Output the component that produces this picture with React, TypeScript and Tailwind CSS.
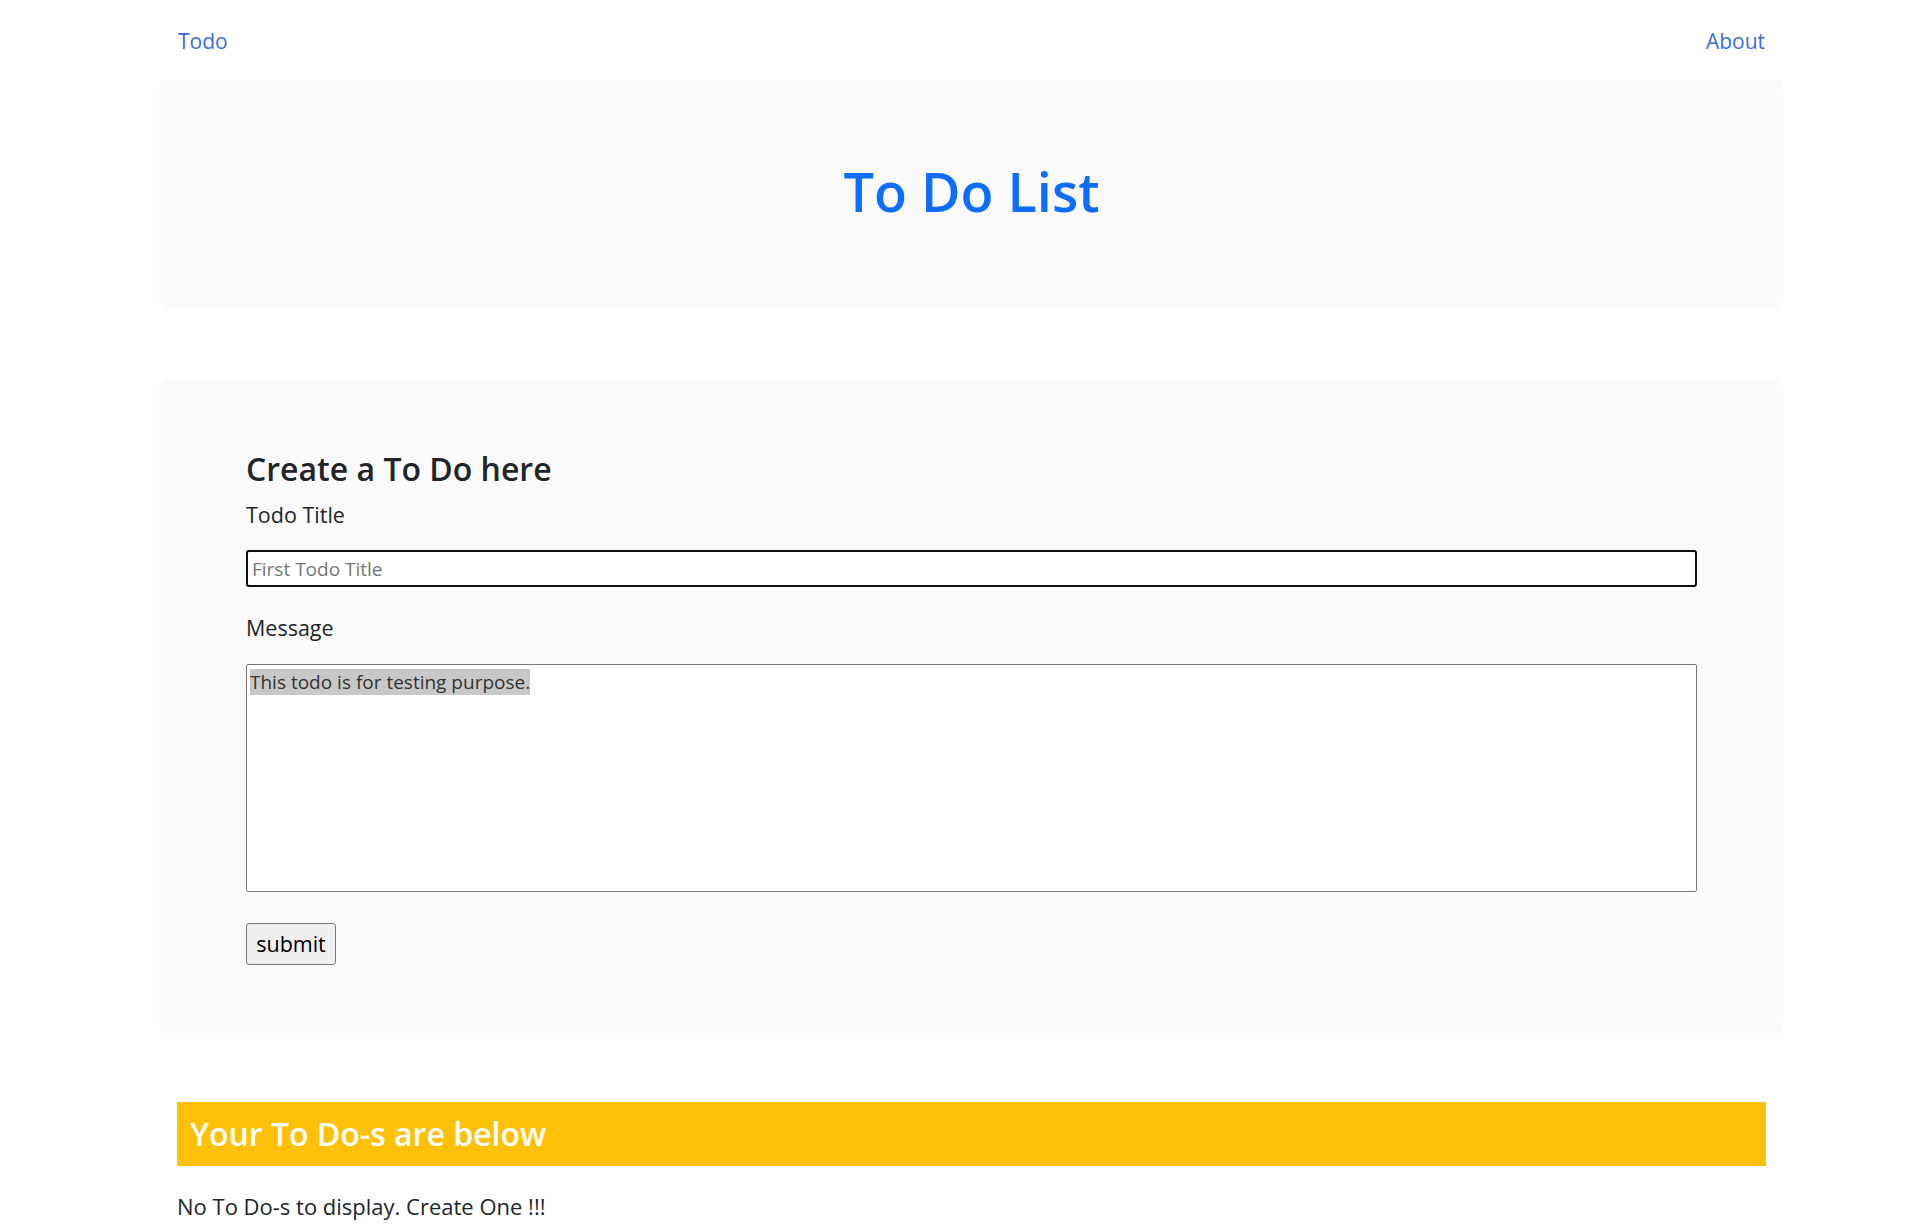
const font = { fontFamily: '"Open Sans", "Noto Sans", sans-serif' };

const NavBar = () => (
  <nav className="flex h-[80px] items-center justify-between px-[18px] pt-[3px]">
    <a href="#" className="text-[21px] text-[#3a6ee0]">
      Todo
    </a>
    <a href="#" className="text-[21px] text-[#3a6ee0]">
      About
    </a>
  </nav>
);

const Banner = () => (
  <div className="flex h-[224px] items-center justify-center bg-[#fafafa] shadow-[0_4px_6px_-3px_rgba(0,0,0,0.07)]">
    <h1 className="mb-[2px] text-[54px] font-semibold leading-[1.2] text-[#0d6efd]">
      To Do List
    </h1>
  </div>
);

const TodoForm = () => (
  <div className="mt-[79px] h-[650px] bg-[#fafafa] px-[86px] pt-[66px] shadow-[0_-4px_6px_-3px_rgba(0,0,0,0.07)]">
    <h3 className="text-[32px] font-semibold leading-[1.25] text-[#212529]">
      Create a To Do here
    </h3>
    <label className="mt-[11px] block text-[21.5px] leading-[30px] text-[#212529]">
      Todo Title
    </label>
    <input
      type="text"
      placeholder="First Todo Title"
      className="mt-[20px] block h-[37px] w-full rounded-[3px] border-2 border-[#101010] bg-white px-[4px] text-[19px] outline-none placeholder:text-[#757575]"
    />
    <label className="mt-[26px] block text-[21.5px] leading-[30px] text-[#212529]">
      Message
    </label>
    <div className="mt-[21px] h-[228px] w-full rounded-[2px] border border-[#767676] bg-white px-[3px] pt-[3px]">
      <span className="bg-[#c8c8c8] text-[19px] leading-[29px] text-[#333]">
        This todo is for testing purpose.
      </span>
    </div>
    <button className="mt-[31px] h-[42px] w-[90px] rounded-[3px] border border-[#767676] bg-[#efefef] text-[21.5px] text-black">
      submit
    </button>
  </div>
);

const TodoList = () => (
  <div className="px-[17px] pt-[69px]">
    <div className="flex h-[64px] items-center bg-[#ffc107] px-[13px]">
      <h3 className="text-[32px] font-semibold text-white">
        Your To Do-s are below
      </h3>
    </div>
    <p className="mt-[25px] text-[22px] leading-[30px] text-[#212529]">
      No To Do-s to display. Create One !!!
    </p>
  </div>
);

export default function App() {
  return (
    <div className="min-h-[1225px] bg-white" style={font}>
      <div className="ml-[160px] w-[1623px] pb-[20px]">
        <NavBar />
        <Banner />
        <TodoForm />
        <TodoList />
      </div>
    </div>
  );
}
